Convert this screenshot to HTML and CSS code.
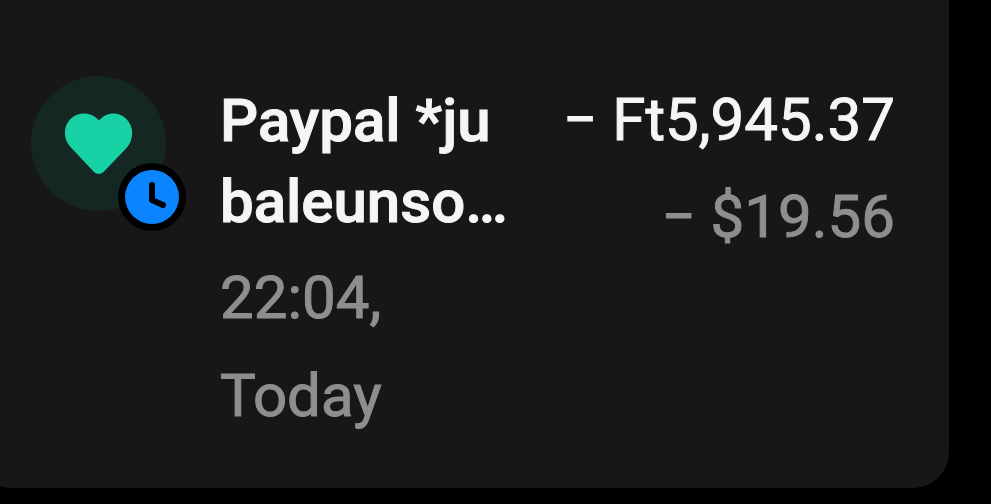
FILE: index.html
```html
<!DOCTYPE html>
<html lang="en">
<head>
<meta charset="utf-8">
<meta name="viewport" content="width=device-width, initial-scale=1">
<title>Transactions</title>
<link rel="stylesheet" href="styles.css">
</head>
<body>
<main class="card">
  <article class="transaction">
    <div class="avatar">
      <svg class="heart" viewBox="0 0 68 62" aria-hidden="true"><path d="M34 7.500C27-1 14-2 6 5.500C-2 13-2 26 5.500 34L29 59Q33.500 63 38.500 59L62 34.500C69 26 69 13 61 5.500C53-2 41-1 34 7.500Z"/></svg>
      <svg class="pending" viewBox="0 0 68 68" role="img" aria-label="Pending"><circle class="ring" cx="34" cy="34" r="34"/><circle class="face" cx="34" cy="34" r="27"/><path class="hands" d="M34 22V37L45 42"/></svg>
    </div>
    <div class="details">
      <h1 class="name">Paypal *ju<br>baleunso…</h1>
      <p class="meta">22:04,<br>Today</p>
    </div>
    <div class="amounts">
      <p class="amount">− Ft5,945.37</p>
      <p class="converted">− $19.56</p>
    </div>
  </article>
</main>
</body>
</html>
```
FILE: styles.css
```css
* { box-sizing: border-box; }
body {
  margin: 0;
  min-height: 100vh;
  padding: 0 42px 16px 0;
  background: #000;
  font-family: Roboto, sans-serif;
  display: flex;
  overflow-x: hidden;
}
h1, p { margin: 0; font-size: 60px; -webkit-text-stroke: 1px currentColor; }
.card {
  flex: 1;
  margin-left: -24px;
  background: #171719;
  border-radius: 0 0 36px 36px;
  padding: 76px 54px 40px 55px;
}
.transaction { display: flex; align-items: flex-start; }
.avatar {
  position: relative;
  flex: none;
  display: grid;
  place-items: center;
  width: 135px;
  height: 135px;
  margin-right: 54px;
  border-radius: 50%;
  background: #152722;
}
.heart { width: 68px; height: 62px; fill: #18d2a5; }
.pending { position: absolute; right: -20px; bottom: -20px; width: 68px; height: 68px; }
.ring { fill: #000; }
.face { fill: #0a84ff; }
.hands { fill: none; stroke: #000; stroke-width: 6; stroke-linecap: round; stroke-linejoin: round; }
.details { flex: 1; padding-top: 4px; }
.name { font-weight: 500; line-height: 81px; color: #f5f5f5; }
.meta { margin-top: 7px; font-weight: 400; line-height: 98px; color: #8e8e90; }
.amounts { flex: none; text-align: right; white-space: nowrap; }
.amount { line-height: 88px; font-weight: 400; color: #f5f5f5; }
.converted { margin-top: 4px; line-height: 98px; font-weight: 400; color: #8e8e90; }
```
